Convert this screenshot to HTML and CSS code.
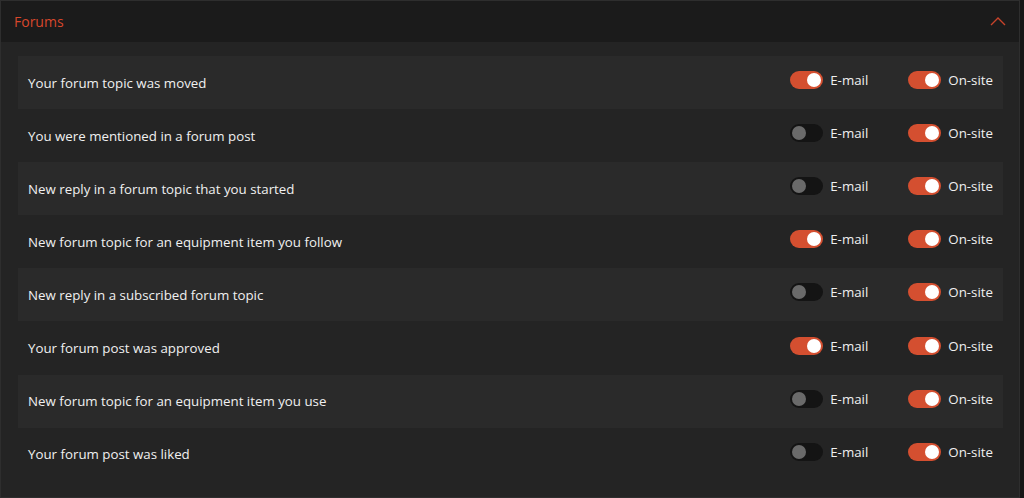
FILE: index.html
```html
<!DOCTYPE html>
<html>
<head>
<meta charset="utf-8">
<link rel="stylesheet" href="styles.css">
</head>
<body>
<section class="panel">
  <header class="panel-header">
    <h2 class="panel-title">Forums</h2>
    <svg class="chevron" width="16" height="10" viewBox="0 0 16 10"><path d="M1 9 L8 2 L15 9" fill="none" stroke="#c8432a" stroke-width="1.4"/></svg>
  </header>
  <div class="panel-body">
    <div class="row"><span class="label">Your forum topic was moved</span><div class="opts"><span class="opt"><span class="toggle on"></span>E-mail</span><span class="opt"><span class="toggle on"></span>On-site</span></div></div>
    <div class="row"><span class="label">You were mentioned in a forum post</span><div class="opts"><span class="opt"><span class="toggle"></span>E-mail</span><span class="opt"><span class="toggle on"></span>On-site</span></div></div>
    <div class="row"><span class="label">New reply in a forum topic that you started</span><div class="opts"><span class="opt"><span class="toggle"></span>E-mail</span><span class="opt"><span class="toggle on"></span>On-site</span></div></div>
    <div class="row"><span class="label">New forum topic for an equipment item you follow</span><div class="opts"><span class="opt"><span class="toggle on"></span>E-mail</span><span class="opt"><span class="toggle on"></span>On-site</span></div></div>
    <div class="row"><span class="label">New reply in a subscribed forum topic</span><div class="opts"><span class="opt"><span class="toggle"></span>E-mail</span><span class="opt"><span class="toggle on"></span>On-site</span></div></div>
    <div class="row"><span class="label">Your forum post was approved</span><div class="opts"><span class="opt"><span class="toggle on"></span>E-mail</span><span class="opt"><span class="toggle on"></span>On-site</span></div></div>
    <div class="row"><span class="label">New forum topic for an equipment item you use</span><div class="opts"><span class="opt"><span class="toggle"></span>E-mail</span><span class="opt"><span class="toggle on"></span>On-site</span></div></div>
    <div class="row"><span class="label">Your forum post was liked</span><div class="opts"><span class="opt"><span class="toggle"></span>E-mail</span><span class="opt"><span class="toggle on"></span>On-site</span></div></div>
  </div>
</section>
</body>
</html>
```
FILE: styles.css
```css
html, body {
  margin: 0;
  padding: 0;
  background: #161616;
  font-family: "Open Sans", "Liberation Sans", sans-serif;
}
.panel {
  width: 1018px;
  height: 496px;
  border: 1px solid #2e2e2e;
  background: #242424;
  box-sizing: content-box;
}
.panel-header {
  height: 41px;
  background: #1b1b1b;
  display: flex;
  align-items: center;
  justify-content: space-between;
  padding: 0 13px 0 13px;
}
.panel-title {
  margin: 0;
  font-size: 14px;
  font-weight: 400;
  color: #d8472b;
}
.chevron {
  margin-top: -2px;
}
.panel-body {
  padding: 14px 16px 17px 17px;
}
.row {
  height: 53.1px;
  display: flex;
  align-items: center;
  justify-content: space-between;
  padding: 0 10px 0 10px;
  color: #f0f0f0;
  font-size: 13.3px;
}
.row:nth-child(odd) {
  background: #2a2a2a;
}
.opts {
  display: flex;
  gap: 40px;
  padding-bottom: 5px;
}
.opt {
  display: flex;
  align-items: center;
  gap: 7px;
}
.toggle {
  width: 33px;
  height: 18px;
  border-radius: 9px;
  background: #141414;
  position: relative;
  display: inline-block;
}
.toggle::after {
  content: "";
  position: absolute;
  left: 2px;
  top: 2px;
  width: 14px;
  height: 14px;
  border-radius: 50%;
  background: #6a6a6a;
}
.toggle.on {
  background: #d44f30;
}
.toggle.on::after {
  left: 17px;
  background: #ffffff;
}
```
